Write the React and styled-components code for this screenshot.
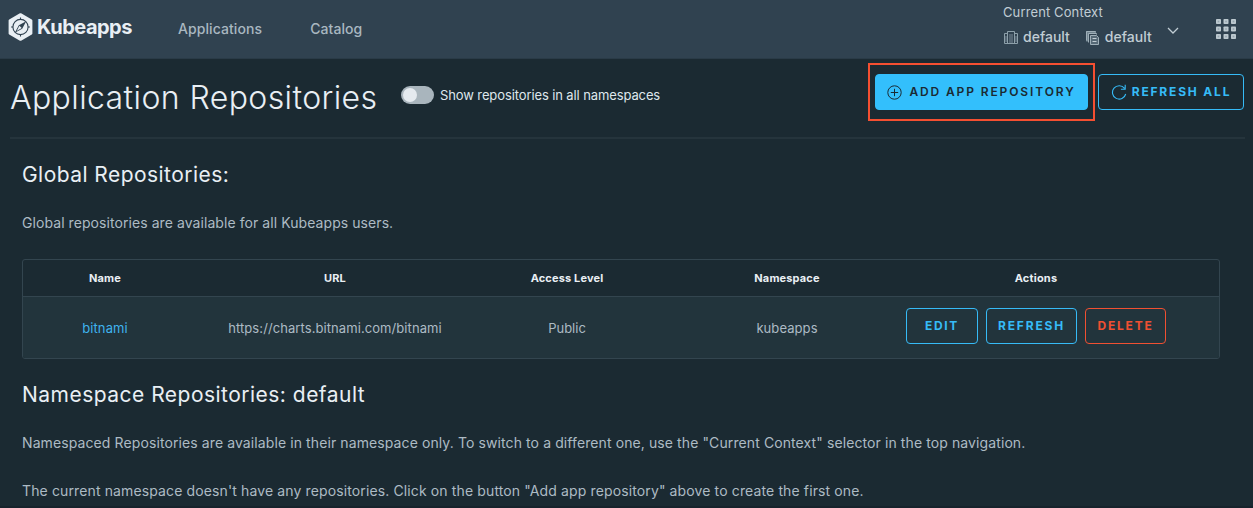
import React from 'react';
import styled, { createGlobalStyle } from 'styled-components';

const GlobalStyle = createGlobalStyle`
  * { box-sizing: border-box; }
  html, body { margin: 0; }
  body {
    background: #1b2a32;
    color: #adbbc4;
    font-family: Inter, "Open Sans", sans-serif;
    font-size: 14px;
    overflow: hidden;
  }
`;

const Page = styled.div`
  height: 508px;
  border-bottom: 2px solid #17232c;
  overflow: hidden;
`;

const Text = styled.span`
  display: inline-block;
  white-space: nowrap;
  letter-spacing: ${(p) => p.$track || 0}px;
`;

const Header = styled.header`
  display: flex;
  height: 59px;
  background: #304250;
  border-bottom: 1px solid #2a3b47;
`;

const Brand = styled.a`
  display: flex;
  align-items: center;
  width: 154px;
  height: 54px;
  padding-left: 8px;
  gap: 4px;
  color: #e9eff4;
  font-size: 20px;
  font-weight: 700;
`;

const Nav = styled.nav`
  display: flex;
  flex: 1;
  height: 57px;
`;

const NavLink = styled.a`
  display: flex;
  align-items: center;
  padding: 0 24px;
  color: #a9b7c0;
  font-weight: 500;
`;

const Context = styled.div`
  display: flex;
  width: 206px;
  color: #c1cdd4;
`;

const ContextBody = styled.div`
  width: 164px;
  padding-top: 4px;
`;

const ContextLabel = styled.div`
  height: 17px;
  font-size: 13px;
  line-height: 17px;
`;

const ContextValues = styled.div`
  display: flex;
  align-items: center;
  height: 31px;
  gap: 15px;
`;

const ContextValue = styled.span`
  display: flex;
  align-items: center;
  gap: 4px;
  font-weight: 500;
  svg {
    margin-top: 2px;
  }
`;

const Chevron = styled.svg`
  margin-top: 27px;
`;

const AppsButton = styled.button`
  display: flex;
  align-items: flex-start;
  width: 44px;
  padding: 19px 0 0 7px;
  border: 0;
  background: none;
`;

const TitleBar = styled.section`
  display: flex;
  align-items: flex-start;
  justify-content: space-between;
  height: 80px;
  margin: 0 8px 0 10px;
  border-bottom: 2px solid #25343c;
`;

const TitleGroup = styled.div`
  display: flex;
  align-items: center;
  height: 76px;
`;

const Title = styled.h1`
  width: 391px;
  margin: 0;
  color: #e9eff4;
  font-size: 32px;
  font-weight: 300;
`;

const Toggle = styled.label`
  display: flex;
  align-items: center;
  gap: 6px;
  color: #dfe7ec;
  font-size: 13px;
  padding-bottom: 4px;
`;

const Switch = styled.span`
  width: 33px;
  height: 18px;
  padding: 2px;
  border-radius: 9px;
  background: #a9b5bd;
  &::before {
    content: '';
    display: block;
    width: 14px;
    height: 14px;
    border-radius: 50%;
    background: #e5eaef;
  }
`;

const Actions = styled.div`
  display: flex;
  padding-top: 4px;
`;

const Highlight = styled.div`
  width: 227px;
  height: 58px;
  padding: 9px 5px;
  border: 2px solid #f54f31;
`;

const tones = {
  outline: { line: '#36bbf7', fill: 'transparent', text: '#36bbf7' },
  primary: { line: '#33bffc', fill: '#33bffc', text: '#1b2a32' },
  danger: { line: '#f05032', fill: 'transparent', text: '#f05032' },
};

const Button = styled.button`
  display: flex;
  align-items: center;
  justify-content: center;
  flex: none;
  width: ${(p) => p.$width}px;
  height: 36px;
  padding: 0;
  gap: ${(p) => p.$gap || 0}px;
  border: 1px solid ${(p) => tones[p.$tone].line};
  border-radius: 4px;
  background: ${(p) => tones[p.$tone].fill};
  color: ${(p) => tones[p.$tone].text};
  font: ${(p) => p.$weight || 700} 12px Inter, sans-serif;
  ${Text} {
    padding-bottom: 2px;
  }
`;

const RefreshSlot = styled.div`
  padding: 11px 1px 0 3px;
`;

const Main = styled.main`
  padding: 21px 33px 0 22px;
`;

const SectionTitle = styled.h2`
  height: 30px;
  margin: 0;
  color: #e9eff4;
  font-size: 21px;
  line-height: 30px;
  font-weight: 400;
`;

const Paragraph = styled.p`
  height: 24px;
  margin: ${(p) => p.$top}px 0 0;
  line-height: 24px;
`;

const Table = styled.div`
  height: 100px;
  margin: 24px 0 21px;
  border: 1px solid #33454f;
  border-radius: 3px;
  overflow: hidden;
`;

const Row = styled.div`
  display: grid;
  grid-template-columns: 164px 296px 168px 272px 226px;
  align-items: center;
  justify-items: center;
`;

const HeadRow = styled(Row)`
  height: 37px;
  border-bottom: 1px solid #33454f;
  color: #e9eff4;
  font-size: 11px;
  font-weight: 700;
`;

const BodyRow = styled(Row)`
  height: 62px;
  padding-bottom: 1px;
  background: #22343c;
  font-size: 13px;
`;

const Link = styled.a`
  color: #3fb3ee;
`;

const RowActions = styled.div`
  display: flex;
  justify-self: start;
  gap: 8px;
  margin: -3px 0 0 -17px;
`;

const Logo = () => (
  <svg width="25" height="28" viewBox="0 0 25 28">
    <path d="M12.5 1.4 23.2 7.5v13L12.5 26.6 1.8 20.5v-13z" fill="#e9eff4" stroke="#e9eff4" strokeWidth="2.4" strokeLinejoin="round" />
    <circle cx="12.5" cy="14" r="7.6" fill="none" stroke="#304250" strokeWidth="1.1" />
    <path d="M12.5 4.6v2M12.5 21.4v2M3.1 14h2M19.9 14h2" stroke="#304250" strokeWidth="1.1" />
    <path d="m18.2 8.2-7.4 4-4 7.6 7.4-4z" fill="#304250" />
    <path d="m11.4 12.8 2.3 2.3-5 2.9z" fill="#e9eff4" />
  </svg>
);

const ClusterIcon = () => (
  <svg width="16" height="16" viewBox="0 0 16 16" fill="none" stroke="#8da0aa">
    <path d="M4.5 3.5h-3v10h13v-10h-3" />
    <path d="M4.5 14V1.5h7V14" />
    <path d="M7 4v9.5M9 4v9.5M3 6v6M13 6v6" strokeWidth=".8" />
  </svg>
);

const NamespaceIcon = () => (
  <svg width="16" height="16" viewBox="0 0 16 16" fill="none" stroke="#9fafb8">
    <path d="M1 1h9.5v2H4v8.5H1z" fill="#71848f" stroke="none" />
    <path d="M1.5 10.5v-9h9v1M3.5 12.5v-9h8v1" />
    <path d="M5.5 5.5h6l2 2v7h-8z" fill="#566976" />
    <path d="M7.5 8.5h4M7.5 11.5h4" stroke="#c1cdd4" />
  </svg>
);

const AppsIcon = () => (
  <svg width="20" height="20" viewBox="0 0 20 20">
    {[0, 7.5, 15].map((y) =>
      [0, 7.5, 15].map((x) => (
        <g key={`${x}-${y}`}>
          <rect x={x} y={y} width="5" height="5" rx=".8" fill="#bcc8cf" />
          <rect x={x + 1.7} y={y + 1.7} width="1.6" height="1.6" fill="#95a5af" />
        </g>
      )),
    )}
  </svg>
);

const PlusIcon = () => (
  <svg width="15" height="15" viewBox="0 0 15 15" fill="none" stroke="#1b2a32">
    <circle cx="7.5" cy="7.5" r="6.7" />
    <path d="M7.5 3.8v7.4M3.8 7.5h7.4" />
  </svg>
);

const RefreshIcon = () => (
  <svg width="16" height="16" viewBox="0 0 16 16" fill="none" stroke="#36bbf7" strokeWidth="1.1">
    <path d="M13.5 4.3A6.7 6.7 0 1 0 14.7 10M14.2 .8v4.4H9.9" />
  </svg>
);

export default function App() {
  return (
    <Page>
      <GlobalStyle />
      <Header>
        <Brand><Logo /><Text $track={-0.5}>Kubeapps</Text></Brand>
        <Nav>
          <NavLink><Text $track={0.08}>Applications</Text></NavLink>
          <NavLink><Text $track={0.08}>Catalog</Text></NavLink>
        </Nav>
        <Context>
          <ContextBody>
            <ContextLabel><Text $track={0.12}>Current Context</Text></ContextLabel>
            <ContextValues>
              <ContextValue><ClusterIcon /><Text>default</Text></ContextValue>
              <ContextValue><NamespaceIcon /><Text>default</Text></ContextValue>
            </ContextValues>
          </ContextBody>
          <Chevron width="12" height="8" viewBox="0 0 12 8" fill="none" stroke="#c1cdd4" strokeWidth="1.3">
            <path d="m1 1 5 5 5-5" />
          </Chevron>
        </Context>
        <AppsButton aria-label="Apps"><AppsIcon /></AppsButton>
      </Header>
      <TitleBar>
        <TitleGroup>
          <Title><Text $track={0.4}>Application Repositories</Text></Title>
          <Toggle><Switch /><Text $track={-0.11}>Show repositories in all namespaces</Text></Toggle>
        </TitleGroup>
        <Actions>
          <Highlight>
            <Button $tone="primary" $width={213} $gap={7} $weight={600}><PlusIcon /><Text $track={1.88}>ADD APP REPOSITORY</Text></Button>
          </Highlight>
          <RefreshSlot>
            <Button $tone="outline" $width={146} $gap={5}><RefreshIcon /><Text $track={1.82}>REFRESH ALL</Text></Button>
          </RefreshSlot>
        </Actions>
      </TitleBar>
      <Main>
        <SectionTitle><Text $track={0.45}>Global Repositories:</Text></SectionTitle>
        <Paragraph $top={21}><Text $track={0.07}>Global repositories are available for all Kubeapps users.</Text></Paragraph>
        <Table>
          <HeadRow>
            <Text $track={0.2}>Name</Text>
            <Text $track={0.1}>URL</Text>
            <Text $track={0.15}>Access Level</Text>
            <Text $track={0.15}>Namespace</Text>
            <Text $track={0.2}>Actions</Text>
          </HeadRow>
          <BodyRow>
            <Link><Text $track={0.08}>bitnami</Text></Link>
            <Text $track={0.08}>https://charts.bitnami.com/bitnami</Text>
            <Text>Public</Text>
            <Text $track={0.08}>kubeapps</Text>
            <RowActions>
              <Button $tone="outline" $width={72}><Text $track={1.7}>EDIT</Text></Button>
              <Button $tone="outline" $width={91}><Text $track={1.8}>REFRESH</Text></Button>
              <Button $tone="danger" $width={81}><Text $track={1.8}>DELETE</Text></Button>
            </RowActions>
          </BodyRow>
        </Table>
        <SectionTitle><Text $track={0.48}>Namespace Repositories: default</Text></SectionTitle>
        <Paragraph $top={21}><Text $track={0.1}>Namespaced Repositories are available in their namespace only. To switch to a different one, use the "Current Context" selector in the top navigation.</Text></Paragraph>
        <Paragraph $top={24}><Text $track={0.125}>The current namespace doesn't have any repositories. Click on the button "Add app repository" above to create the first one.</Text></Paragraph>
      </Main>
    </Page>
  );
}
